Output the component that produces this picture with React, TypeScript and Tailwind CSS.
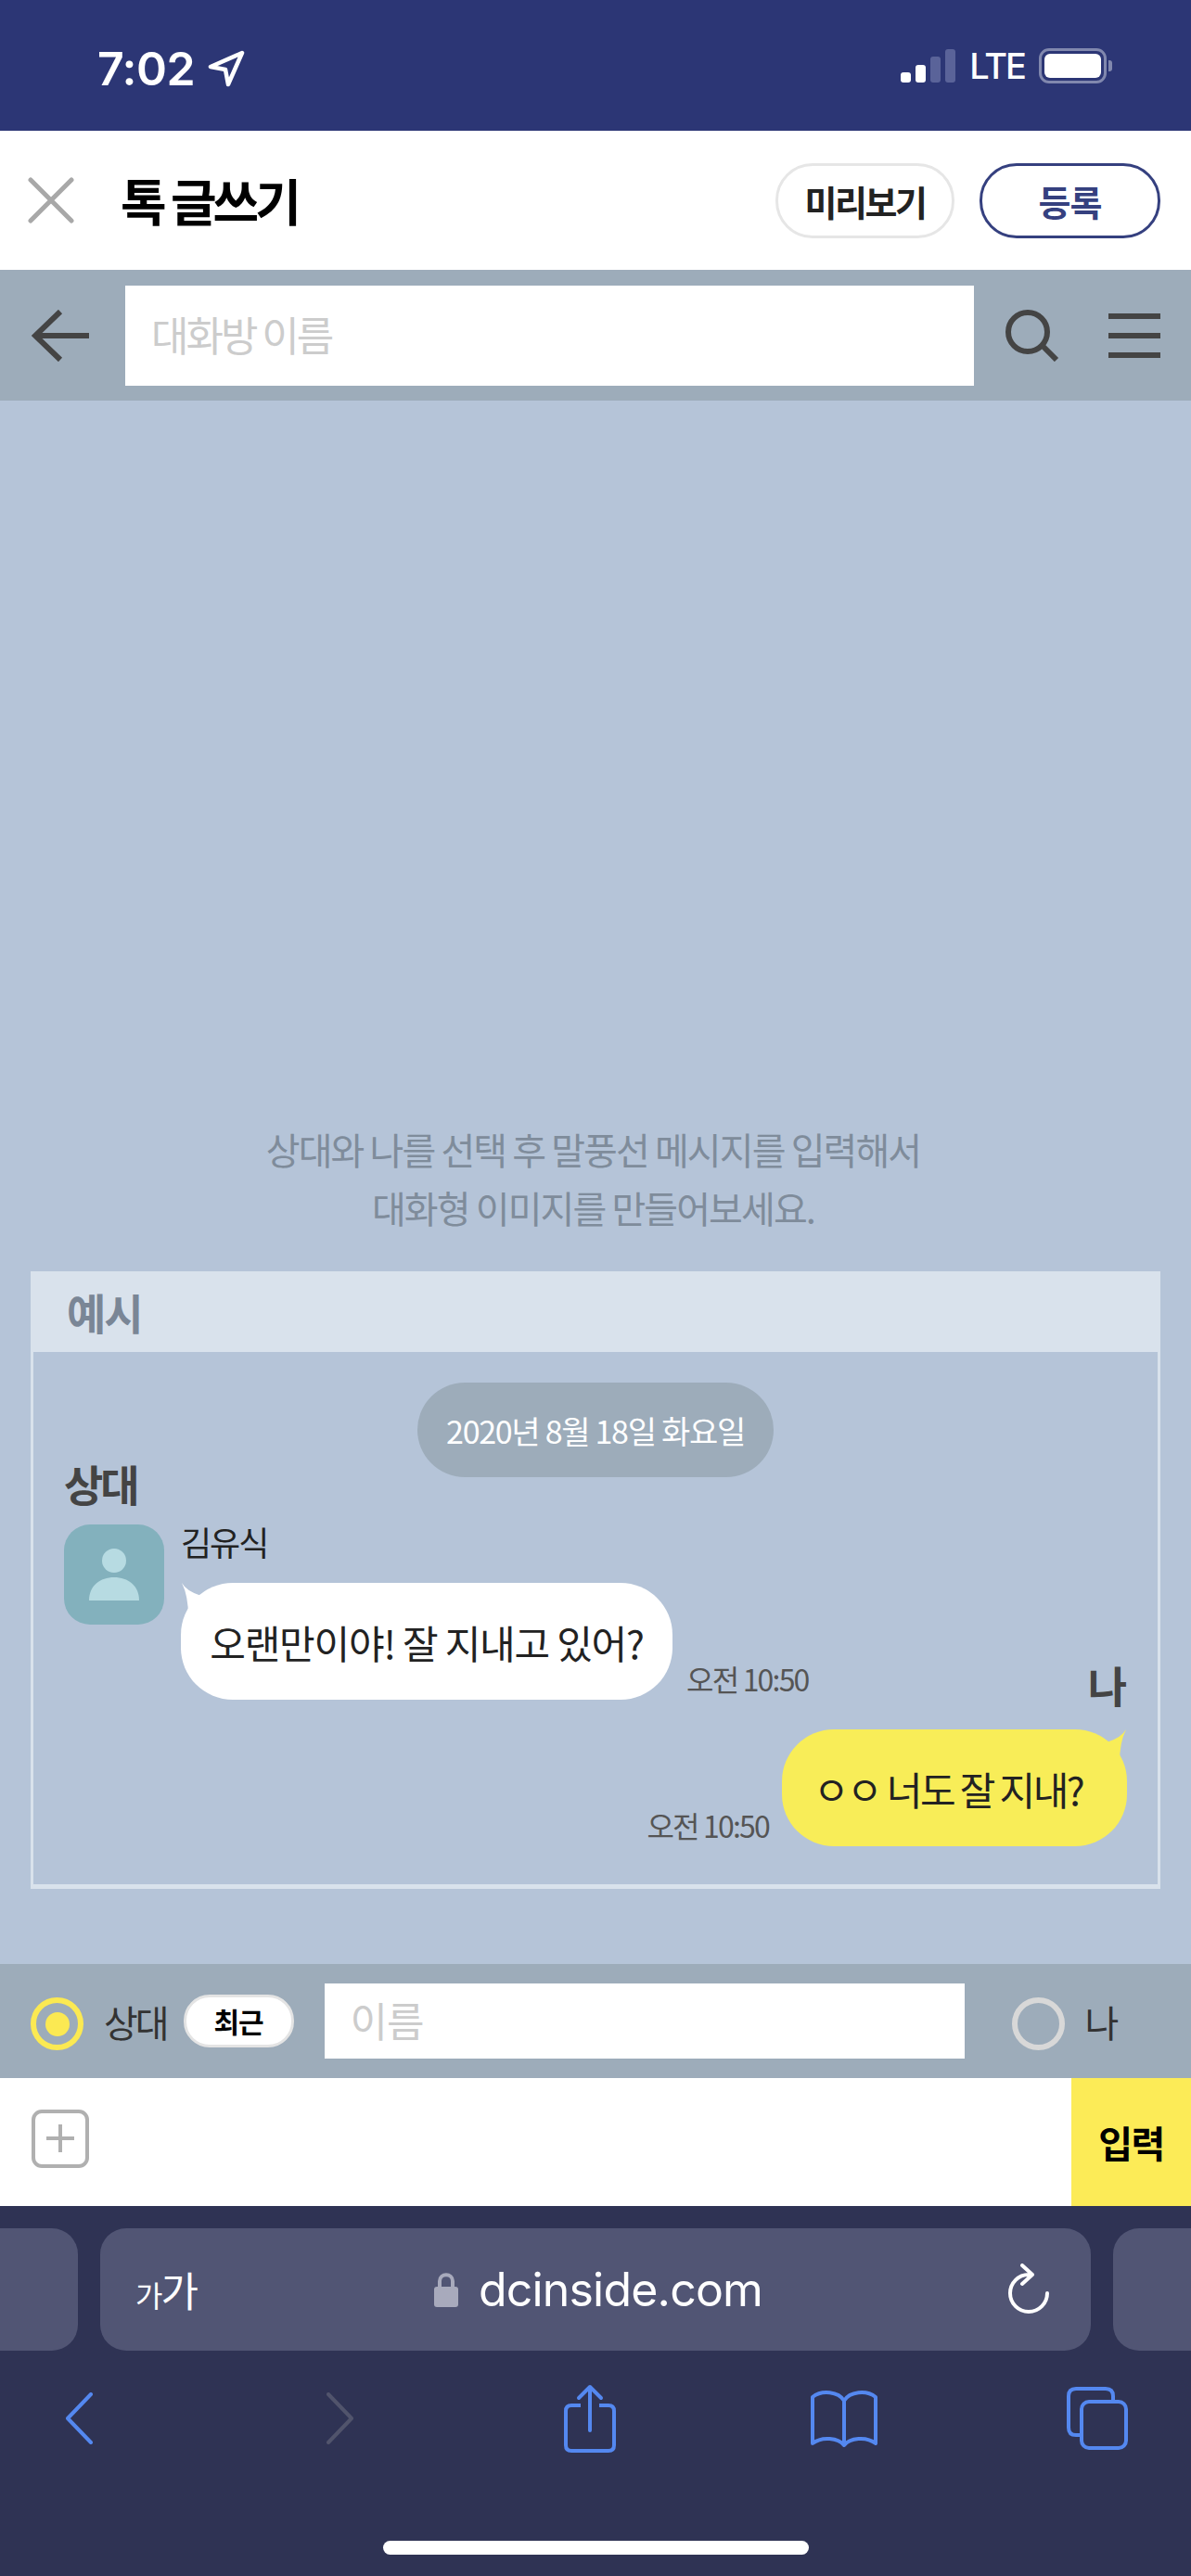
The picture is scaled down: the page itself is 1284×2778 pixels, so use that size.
import React from 'react';

const font = "font-['Noto_Sans_CJK_KR','Inter',sans-serif]";

const StatusBar = () => (
  <div className="h-[141px] bg-[#2c3675] flex items-start justify-between pl-[105px] pr-[85px] pt-[49px] text-white">
    <div className="flex items-center gap-[14px]">
      <span className="font-['Inter',sans-serif] font-semibold text-[50px] leading-[50px] tracking-[-0.5px]">7:02</span>
      <svg width="40" height="40" viewBox="0 0 40 40" fill="none" stroke="white" strokeWidth="4.5" strokeLinejoin="round">
        <path d="M37 3 L3 18 L19 21 L22 37 Z" />
      </svg>
    </div>
    <div className="flex items-center gap-[15px] h-[44px]">
      <div className="flex items-end gap-[5px] h-[36px]">
        <div className="w-[11px] h-[11px] rounded-[3px] bg-white" />
        <div className="w-[11px] h-[19px] rounded-[3px] bg-white" />
        <div className="w-[11px] h-[28px] rounded-[3px] bg-[#5a6399]" />
        <div className="w-[11px] h-[36px] rounded-[3px] bg-[#5a6399]" />
      </div>
      <span className="font-['Inter',sans-serif] font-medium text-[38px] leading-[44px] tracking-[-2px]">LTE</span>
      <div className="flex items-center gap-[2px]">
        <div className="w-[73px] h-[38px] rounded-[11px] border-[3px] border-[#8188ae] p-[3px]">
          <div className="w-full h-full rounded-[6px] bg-white" />
        </div>
        <div className="w-[4px] h-[12px] rounded-r-[3px] bg-[#8188ae]" />
      </div>
    </div>
  </div>
);

const Header = () => (
  <div className="h-[150px] bg-white flex items-center pl-[30px] pr-[33px]">
    <svg width="50" height="50" viewBox="0 0 50 50" stroke="#a8a8a8" strokeWidth="5" strokeLinecap="round">
      <path d="M3 3 L47 47 M47 3 L3 47" />
    </svg>
    <h1 className="ml-[50px] text-[54px] font-bold text-black tracking-[-4px] leading-none">톡 글쓰기</h1>
    <div className="ml-auto flex gap-[27px]">
      <button className="w-[193px] h-[81px] rounded-[40px] border-[3px] border-[#e6e6e6] text-[#222] text-[38px] font-bold tracking-[-2.5px]">미리보기</button>
      <button className="w-[195px] h-[81px] rounded-[40px] border-[3px] border-[#35407f] text-[#35407f] text-[38px] font-bold tracking-[-1px]">등록</button>
    </div>
  </div>
);

const Toolbar = () => (
  <div className="h-[141px] bg-[#9dacba] flex items-center pl-[34px] pr-[33px]">
    <svg width="62" height="56" viewBox="0 0 62 56" fill="none" stroke="#444" strokeWidth="6">
      <path d="M31 2 L4 28 L31 54 M4 28 H62" />
    </svg>
    <div className="ml-[39px] w-[915px] h-[108px] bg-white flex items-center pl-[28px] pb-[3px] text-[44px] text-[#cccccc] tracking-[-3px]">대화방 이름</div>
    <svg className="ml-[33px]" width="60" height="56" viewBox="0 0 60 56" fill="none" stroke="#444" strokeWidth="6">
      <circle cx="25" cy="24" r="21" />
      <path d="M41 39 L56 54" />
    </svg>
    <div className="ml-auto w-[56px] flex flex-col gap-[15px]">
      <div className="h-[6px] bg-[#444]" />
      <div className="h-[6px] bg-[#444]" />
      <div className="h-[6px] bg-[#444]" />
    </div>
  </div>
);

const Tail = ({ color, mine }: { color: string; mine?: boolean }) => (
  <svg
    className={`absolute top-0 ${mine ? 'right-0' : 'left-0'}`}
    width="24"
    height="36"
    viewBox="0 0 24 36"
    style={mine ? { transform: 'scaleX(-1)' } : undefined}
  >
    <path d="M1 0 Q6 9 22 14 L22 30 L8 36 Q8 14 1 0 Z" fill={color} />
  </svg>
);

const Example = () => (
  <div className="mx-[33px] mt-[37px]">
    <div className="h-[87px] bg-[#d9e2ec] flex items-center pl-[39px] text-[46px] font-bold text-[#7a8696] tracking-[-2px]">예시</div>
    <div className="h-[579px] border-x-[3px] border-b-[5px] border-[#d9e2ec] pt-[33px] pl-[33px] pr-[33px]">
      <div className="mx-auto w-[384px] h-[102px] rounded-[51px] bg-[#9dacba] flex items-center justify-center text-white text-[34px] tracking-[-1.3px]">
        2020년 8월 18일 화요일
      </div>
      <div className="-mt-[22px] text-[46px] leading-[56px] font-bold text-[#444] tracking-[-3px]">상대</div>
      <div className="mt-[17px] flex items-start">
        <div className="w-[108px] h-[108px] rounded-[28px] bg-[#83b1bd] flex items-center justify-center shrink-0">
          <svg width="54" height="56" viewBox="0 0 54 56" fill="#b7dbe2">
            <ellipse cx="27" cy="13" rx="13" ry="13" />
            <path d="M0 56 C0 40 12 31 27 31 C42 31 54 40 54 56 Z" />
          </svg>
        </div>
        <div className="ml-[18px] -mt-[5px]">
          <div className="text-[36px] leading-[46px] text-[#222] tracking-[-2px]">김유식</div>
          <div className="mt-[22px] flex items-end">
            <div className="relative">
              <Tail color="#ffffff" />
              <div className="h-[126px] w-[530px] rounded-[56px] bg-white flex items-center justify-center text-[42px] text-[#222] tracking-[-1.2px]">
                오랜만이야! 잘 지내고 있어?
              </div>
            </div>
            <span className="ml-[15px] mb-[5px] text-[32px] leading-[36px] text-[#555] tracking-[-1.8px]">오전 10:50</span>
          </div>
        </div>
      </div>
      <div className="-mt-[45px] text-right text-[46px] leading-[56px] font-bold text-[#444]">나</div>
      <div className="mt-[21px] flex items-end justify-end">
        <span className="mr-[14px] mb-[5px] text-[32px] leading-[36px] text-[#555] tracking-[-1.8px]">오전 10:50</span>
        <div className="relative">
          <Tail color="#f8ed58" mine />
          <div className="h-[126px] w-[372px] rounded-[56px] bg-[#f8ed58] flex items-center justify-center pr-[14px] text-[42px] text-[#222] tracking-[-2.6px]">
            ㅇㅇ 너도 잘 지내?
          </div>
        </div>
      </div>
    </div>
  </div>
);

const Main = () => (
  <div className="h-[1686px] bg-[#b5c4d8] flex flex-col justify-end pb-[81px]">
    <p className="text-center pr-[5px] text-[40px] leading-[63px] text-[#7f8c9b] tracking-[-1.9px]">
      상대와 나를 선택 후 말풍선 메시지를 입력해서
      <br />
      대화형 이미지를 만들어보세요.
    </p>
    <Example />
  </div>
);

const SenderRow = () => (
  <div className="h-[123px] bg-[#9dacba] flex items-center pl-[33px] text-[#333]">
    <div className="w-[57px] h-[57px] mt-[6px] rounded-full border-[6px] border-[#fbe952] flex items-center justify-center">
      <div className="w-[26px] h-[26px] rounded-full bg-[#fbe952]" />
    </div>
    <span className="ml-[22px] text-[40px] leading-none tracking-[-3px]">상대</span>
    <div className="ml-[18px] w-[119px] h-[57px] rounded-[28px] bg-white border-[3px] border-[#e4e4e4] flex items-center justify-center text-[30px] font-bold text-black tracking-[-1px]">최근</div>
    <div className="ml-[33px] w-[690px] h-[81px] bg-white flex items-center pl-[28px] pb-[4px] text-[44px] text-[#cccccc] tracking-[-1px]">이름</div>
    <div className="ml-[51px] w-[57px] h-[57px] mt-[6px] rounded-full border-[6px] border-[#d8d8d8]" />
    <span className="ml-[22px] text-[40px] leading-none">나</span>
  </div>
);

const InputRow = () => (
  <div className="h-[138px] bg-white flex items-stretch">
    <div className="flex-1 pl-[34px] pb-[8px] flex items-center">
      <div className="w-[62px] h-[63px] rounded-[11px] border-[4px] border-[#b0b0b0] flex items-center justify-center">
        <svg width="32" height="32" viewBox="0 0 32 32" stroke="#b0b0b0" strokeWidth="4">
          <path d="M16 1 V31 M1 16 H31" />
        </svg>
      </div>
    </div>
    <div className="w-[129px] bg-[#fceb57] flex items-center justify-center text-[40px] font-bold text-black tracking-[-1.5px]">입력</div>
  </div>
);

const SafariBar = () => (
  <div className="h-[399px] bg-[#2f3354]">
    <div className="pt-[24px] flex gap-[24px] overflow-hidden">
      <div className="w-[84px] h-[132px] rounded-r-[28px] bg-[#515574] shrink-0" />
      <div className="w-[1068px] h-[132px] rounded-[28px] bg-[#515574] shrink-0 flex items-center pl-[38px] pr-[44px] text-white">
        <span className="text-[44px] tracking-[-2px] w-[80px]"><span className="text-[32px]">가</span>가</span>
        <div className="flex-1 flex items-center justify-center gap-[22px] pr-[22px]">
          <svg width="26" height="38" viewBox="0 0 26 38">
            <path d="M6 18 V10 C6 1 20 1 20 10 V18" fill="none" stroke="#a8aabc" strokeWidth="4" />
            <rect x="0" y="16" width="26" height="22" rx="3" fill="#a8aabc" />
          </svg>
          <span className="font-['Inter',sans-serif] text-[50px] leading-none tracking-[-0.8px]">dcinside.com</span>
        </div>
        <svg width="46" height="56" viewBox="0 0 46 56" fill="none" stroke="white" strokeWidth="4" strokeLinecap="round" strokeLinejoin="round">
          <path d="M23 12 A20 20 0 1 0 43 32 M16 2 L27 12 L16 22" />
        </svg>
      </div>
      <div className="w-[84px] h-[132px] rounded-l-[28px] bg-[#515574] shrink-0" />
    </div>
    <div className="mt-[36px] h-[74px] flex items-center pl-[70px]">
      <svg width="30" height="56" viewBox="0 0 30 56" fill="none" stroke="#5488f0" strokeWidth="4" strokeLinecap="round" strokeLinejoin="round">
        <path d="M28 2 L3 28 L28 54" />
      </svg>
      <svg className="ml-[252px]" width="30" height="56" viewBox="0 0 30 56" fill="none" stroke="#51546c" strokeWidth="4" strokeLinecap="round" strokeLinejoin="round">
        <path d="M2 2 L27 28 L2 54" />
      </svg>
      <svg className="ml-[226px]" width="56" height="74" viewBox="0 0 56 74" fill="none" stroke="#5488f0" strokeWidth="4" strokeLinejoin="round">
        <path d="M18 23 H8 Q2 23 2 29 V66 Q2 72 8 72 H48 Q54 72 54 66 V29 Q54 23 48 23 H38" />
        <path d="M28 50 V3 M16 15 L28 3 L40 15" strokeLinecap="round" />
      </svg>
      <svg className="ml-[210px]" width="72" height="62" viewBox="0 0 72 62" fill="none" stroke="#5488f0" strokeWidth="4" strokeLinejoin="round">
        <path d="M36 12 C30 2 12 0 2 8 V58 C12 50 30 52 36 60 C42 52 60 50 70 58 V8 C60 0 42 2 36 12 Z M36 12 V60" />
      </svg>
      <svg className="ml-[204px]" width="66" height="68" viewBox="0 0 66 68" fill="none" stroke="#5488f0" strokeWidth="4">
        <path d="M16 52 H10 Q2 52 2 44 V10 Q2 2 10 2 H42 Q50 2 50 10 V16" />
        <rect x="16" y="16" width="48" height="50" rx="8" />
      </svg>
    </div>
    <div className="mt-[95px] mx-auto w-[459px] h-[15px] rounded-full bg-white" />
  </div>
);

export default function App() {
  return (
    <div className={`w-[1284px] h-[2778px] overflow-hidden ${font}`}>
      <StatusBar />
      <Header />
      <Toolbar />
      <Main />
      <SenderRow />
      <InputRow />
      <SafariBar />
    </div>
  );
}
